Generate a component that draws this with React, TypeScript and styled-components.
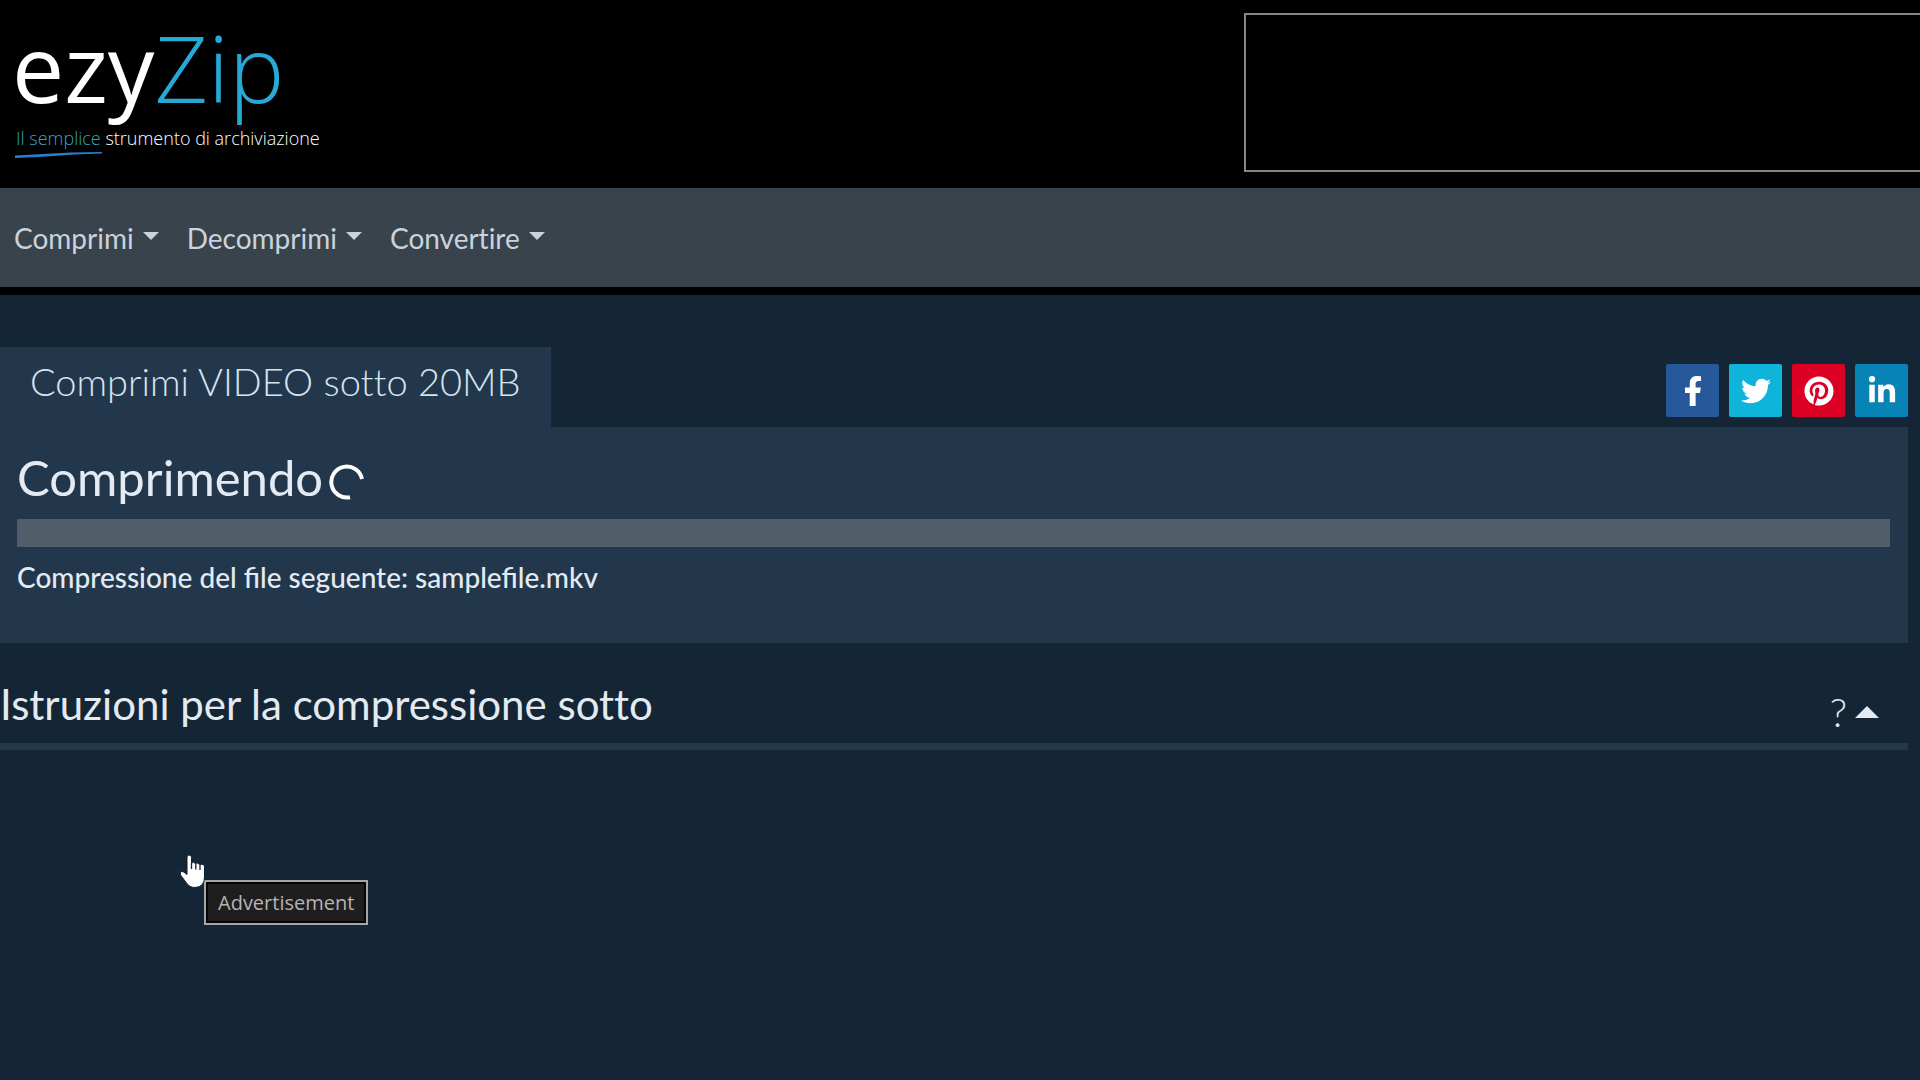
import React from "react";
import styled, { createGlobalStyle } from "styled-components";
import { FaFacebookF, FaLinkedinIn, FaPinterest, FaTwitter } from "react-icons/fa";

const GlobalStyle = createGlobalStyle`
  *, *::before, *::after { box-sizing: border-box; }
  body {
    margin: 0;
    background: #142635;
    color: #e4eaf2;
    font-family: Lato, "Liberation Sans", sans-serif;
    font-size: 28px;
  }
  h1, h2, p { margin: 0; font-weight: 400; }
  h1, h2, button { font-variant-ligatures: none; }
`;

const Page = styled.div`
  position: relative;
  min-height: 100vh;
`;

const Header = styled.header`
  display: flex;
  justify-content: space-between;
  height: 188px;
  background: #000;
`;

const Brand = styled.a`
  display: flex;
  flex-direction: column;
  padding: 14px 0 0 12px;
  color: #fff;
  text-decoration: none;
  font-family: "Open Sans", "Noto Sans", sans-serif;
`;

const BrandName = styled.span`
  margin-bottom: 4px;
  font-size: 93px;
  line-height: 106px;
`;

const BrandAccent = styled.span`
  color: #27a9d6;
  font-weight: 300;
`;

const Tagline = styled.span`
  padding-left: 4px;
  font-size: 18px;
  line-height: 28px;
  font-weight: 300;
  white-space: nowrap;
`;

const TaglineAccent = styled.span`
  color: #35a3bd;
`;

const Underline = styled.svg`
  display: block;
  width: 88px;
  height: 8px;
  margin-left: 3px;
`;

const AdSlot = styled.aside`
  width: 676px;
  height: 159px;
  margin-top: 13px;
  border: 2px solid #858585;
  border-right: 0;
`;

const Nav = styled.nav`
  display: flex;
  gap: 28px;
  height: 107px;
  padding: 0 14px;
  background: #39434c;
  border-bottom: 8px solid #000;
`;

const NavButton = styled.button`
  display: flex;
  align-items: center;
  gap: 9px;
  padding: 0;
  border: 0;
  background: none;
  color: #c9d3dd;
  font: inherit;
  font-variant-ligatures: none;
  cursor: pointer;

  &::after {
    content: "";
    margin-bottom: 4px;
    border: 8px solid transparent;
    border-top-color: currentColor;
    border-bottom: 0;
  }
`;

const Main = styled.main`
  padding: 52px 12px 0 0;
`;

const TitleRow = styled.div`
  display: flex;
  justify-content: space-between;
  align-items: flex-end;
`;

const TabTitle = styled.h1`
  height: 80px;
  padding: 0 30px;
  background: #22374c;
  color: #d5e4ee;
  font-size: 38px;
  line-height: 68px;
  font-weight: 300;
`;

const ShareList = styled.div`
  display: flex;
  gap: 10px;
  padding-bottom: 10px;
`;

const ShareLink = styled.a<{ $color: string }>`
  display: grid;
  place-items: center;
  width: 53px;
  height: 53px;
  border-radius: 2px;
  background: ${(p) => p.$color};
  color: #fff;
  font-size: 30px;
`;

const Panel = styled.section`
  height: 216px;
  padding: 16px 18px 16px 17px;
  background: #22374c;
`;

const StatusTitle = styled.h2`
  display: flex;
  align-items: center;
  gap: 6px;
  height: 68px;
  font-size: 49px;
  line-height: 60px;
`;

const Spinner = styled.svg`
  width: 36px;
  height: 36px;
  margin-top: 10px;
`;

const Bar = styled.div`
  height: 28px;
  margin: 8px 0 14px;
  background: #515e6a;
`;

const FileNote = styled.p`
  font-weight: 500;
  line-height: 32px;
`;

const Instructions = styled.section`
  display: flex;
  justify-content: space-between;
  align-items: center;
  height: 107px;
  padding-top: 22px;
  border-bottom: 7px solid #22374c;
`;

const InstructionsTitle = styled.h2`
  font-size: 42px;
  line-height: 60px;
`;

const Toggle = styled.button`
  display: flex;
  align-items: center;
  gap: 8px;
  margin-right: 29px;
  padding: 16px 0 0;
  border: 0;
  background: none;
  color: #e4eaf2;
  font: 300 40px/40px Lato, sans-serif;
  cursor: pointer;

  &::after {
    content: "";
    border: 12px solid transparent;
    border-bottom-color: currentColor;
    border-top: 0;
  }
`;

const Pointer = styled.svg`
  position: absolute;
  left: 179px;
  top: 854px;
  width: 27px;
  height: 35px;
`;

const Tooltip = styled.div`
  position: absolute;
  left: 204px;
  top: 880px;
  padding: 0 12px;
  border: 2px solid #a3a6ab;
  outline: 2px solid #060607;
  outline-offset: -4px;
  background: #1f1d1e;
  color: #b4b4b4;
  font: 20px/41px "Open Sans", "Noto Sans", sans-serif;
`;

const menus = ["Comprimi", "Decomprimi", "Convertire"];

const networks = [
  { name: "Facebook", color: "#27599a", Icon: FaFacebookF },
  { name: "Twitter", color: "#0eb4d9", Icon: FaTwitter },
  { name: "Pinterest", color: "#dc0024", Icon: FaPinterest },
  { name: "LinkedIn", color: "#0784b5", Icon: FaLinkedinIn },
];

export default function App() {
  return (
    <Page>
      <GlobalStyle />
      <Header>
        <Brand href="#">
          <BrandName>
            ezy<BrandAccent>Zip</BrandAccent>
          </BrandName>
          <Tagline>
            <TaglineAccent>Il semplice</TaglineAccent> strumento di archiviazione
          </Tagline>
          <Underline viewBox="0 0 88 8" aria-hidden="true">
            <path d="M0 3.5 L56 .5 L87 0 V1.6 L60 2.4 L24 5 L0 6Z" fill="#277fcb" />
          </Underline>
        </Brand>
        <AdSlot />
      </Header>
      <Nav>
        {menus.map((menu) => (
          <NavButton key={menu} type="button" aria-haspopup="menu">
            {menu}
          </NavButton>
        ))}
      </Nav>
      <Main>
        <TitleRow>
          <TabTitle>Comprimi VIDEO sotto 20MB</TabTitle>
          <ShareList>
            {networks.map(({ name, color, Icon }) => (
              <ShareLink key={name} href="#" aria-label={name} $color={color}>
                <Icon />
              </ShareLink>
            ))}
          </ShareList>
        </TitleRow>
        <Panel>
          <StatusTitle>
            Comprimendo
            <Spinner viewBox="0 0 36 36" aria-hidden="true">
              <path d="M33 15 A15.5 15.5 0 1 0 21 33.2" fill="none" stroke="#fff" strokeWidth="4" />
            </Spinner>
          </StatusTitle>
          <Bar role="progressbar" aria-label="Comprimendo" aria-valuenow={0} />
          <FileNote>Compressione del file seguente: samplefile.mkv</FileNote>
        </Panel>
        <Instructions>
          <InstructionsTitle>Istruzioni per la compressione sotto</InstructionsTitle>
          <Toggle type="button">?</Toggle>
        </Instructions>
      </Main>
      <Tooltip role="tooltip">Advertisement</Tooltip>
      <Pointer viewBox="0 0 27 35" aria-hidden="true">
        <path
          d="M8 3 Q8 1 10 1 Q12.500 1 12.500 3.500 V9 Q14.500 7.500 16.500 9.500 Q18.500 8 20.500 10.500 Q25.500 9.500 25.500 13 V23 Q25.500 33 16 33.500 Q10.500 33.500 7.500 29 L1.500 21 Q.5 18.500 2.500 17.500 Q4.500 17 8 20.500Z"
          fill="#fff"
          stroke="#10202d"
          strokeWidth="1"
        />
        <path d="M12.500 9 V15 M16.800 9.500 V15.500 M21 11 V16" stroke="#142635" strokeWidth="1.300" />
      </Pointer>
    </Page>
  );
}
